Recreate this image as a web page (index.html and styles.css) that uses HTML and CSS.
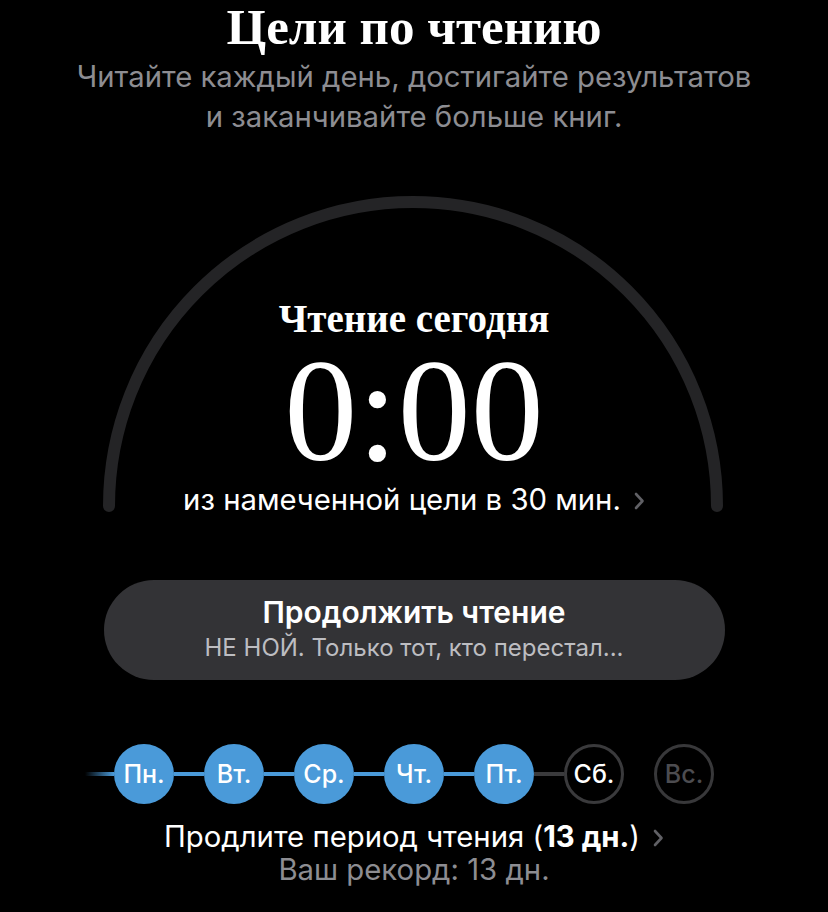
FILE: index.html
```html
<!DOCTYPE html>
<html lang="ru">
<head>
    <meta charset="UTF-8">
    <meta name="viewport" content="width=device-width, initial-scale=1.0">
    <title>Цели по чтению</title>
    <link rel="stylesheet" href="styles.css">
</head>
<body>
    <header class="intro">
        <h1 class="intro-title">Цели по чтению</h1>
        <p class="intro-text">Читайте каждый день, достигайте результатов<br>и заканчивайте больше книг.</p>
    </header>

    <section class="gauge">
        <svg class="gauge-arc" width="828" height="340" viewBox="0 0 828 340">
            <path d="M109 321 A304 304 0 1 1 717 321" fill="none" stroke="#242426" stroke-width="12" stroke-linecap="round"/>
        </svg>
        <div class="gauge-label">Чтение сегодня</div>
        <div class="gauge-time">0:00</div>
        <a class="gauge-goal" href="#">
            <span>из намеченной цели в 30 мин.</span>
            <svg class="chevron" width="11" height="18" viewBox="0 0 11 18"><path d="M2 2 L8.5 9 L2 16" fill="none" stroke="#606065" stroke-width="2.6" stroke-linecap="round" stroke-linejoin="round"/></svg>
        </a>
    </section>

    <button class="continue">
        <span class="continue-title">Продолжить чтение</span>
        <span class="continue-book">НЕ НОЙ. Только тот, кто перестал...</span>
    </button>

    <div class="week">
        <span class="track track-lead"></span>
        <span class="day done">Пн.</span>
        <span class="track"></span>
        <span class="day done">Вт.</span>
        <span class="track"></span>
        <span class="day done">Ср.</span>
        <span class="track"></span>
        <span class="day done">Чт.</span>
        <span class="track"></span>
        <span class="day done">Пт.</span>
        <span class="track track-rest"></span>
        <span class="day today">Сб.</span>
        <span class="track track-none"></span>
        <span class="day later">Вс.</span>
    </div>

    <div class="streak">
        <a class="streak-main" href="#">
            <span>Продлите период чтения (<b>13 дн.</b>)</span>
            <svg class="chevron" width="11" height="18" viewBox="0 0 11 18"><path d="M2 2 L8.5 9 L2 16" fill="none" stroke="#606065" stroke-width="2.6" stroke-linecap="round" stroke-linejoin="round"/></svg>
        </a>
        <div class="streak-best">Ваш рекорд: 13 дн.</div>
    </div>
</body>
</html>
```

FILE: styles.css
```css
body {
    margin: 0;
    background-color: #000;
    color: #fff;
    font-family: Inter, Roboto, sans-serif;
    display: flex;
    flex-direction: column;
    align-items: center;
}
a {
    color: inherit;
    text-decoration: none;
}
.intro {
    text-align: center;
}
.intro-title {
    margin: 0;
    font-family: 'Liberation Serif', serif;
    font-size: 51px;
    line-height: 54px;
    font-weight: bold;
}
.intro-text {
    margin: 3px 0 0;
    font-size: 29.3px;
    line-height: 40px;
    color: #8d8d92;
}
.gauge {
    position: relative;
    width: 828px;
    height: 340px;
    margin-top: 48px;
    display: flex;
    flex-direction: column;
    align-items: center;
    padding-top: 114px;
    box-sizing: border-box;
}
.gauge-arc {
    position: absolute;
    top: 0;
    left: 0;
}
.gauge-label {
    position: relative;
    font-family: 'Liberation Serif', serif;
    font-weight: bold;
    font-size: 39px;
    line-height: 40px;
}
.gauge-time {
    position: relative;
    font-family: 'Liberation Serif', serif;
    font-size: 146px;
    line-height: 140px;
    margin-top: 2px;
}
.gauge-goal {
    position: relative;
    font-size: 29.3px;
    line-height: 32px;
    margin-top: 3px;
    display: flex;
    align-items: center;
    gap: 13px;
}
.chevron {
    margin-top: 2px;
}
.continue {
    margin-top: 55px;
    width: 621px;
    height: 100px;
    border: none;
    border-radius: 50px;
    background-color: #333336;
    color: #fff;
    font-family: inherit;
    display: flex;
    flex-direction: column;
    align-items: center;
    padding: 16px 0 0;
    box-sizing: border-box;
    cursor: pointer;
}
.continue-title {
    font-size: 30px;
    line-height: 32px;
    font-weight: 600;
}
.continue-book {
    margin-top: 6px;
    font-size: 24px;
    line-height: 28px;
    color: #bdbdc1;
}
.week {
    margin-top: 64px;
    display: flex;
    align-items: center;
}
.day {
    width: 60px;
    height: 60px;
    border-radius: 50%;
    box-sizing: border-box;
    display: flex;
    align-items: center;
    justify-content: center;
    font-size: 25px;
    font-weight: 500;
}
.day.done {
    background-color: #4a9ad9;
}
.day.today {
    border: 3px solid #3a3a3c;
}
.day.later {
    border: 3px solid #38383a;
    color: #4c4c50;
}
.track {
    width: 30px;
    height: 4px;
    background-color: #4a9ad9;
}
.track-lead {
    width: 29px;
    margin-left: -29px;
    background: linear-gradient(to right, rgba(74, 154, 217, 0), #4a9ad9);
}
.track-rest {
    background-color: #3a3a3c;
}
.track-none {
    background: none;
}
.streak {
    margin-top: 17px;
    text-align: center;
    font-size: 29.3px;
}
.streak-main {
    display: flex;
    align-items: center;
    gap: 13px;
    line-height: 32px;
}
.streak-main b {
    font-weight: 700;
}
.streak-best {
    line-height: 33px;
    color: #8d8d92;
}
```
